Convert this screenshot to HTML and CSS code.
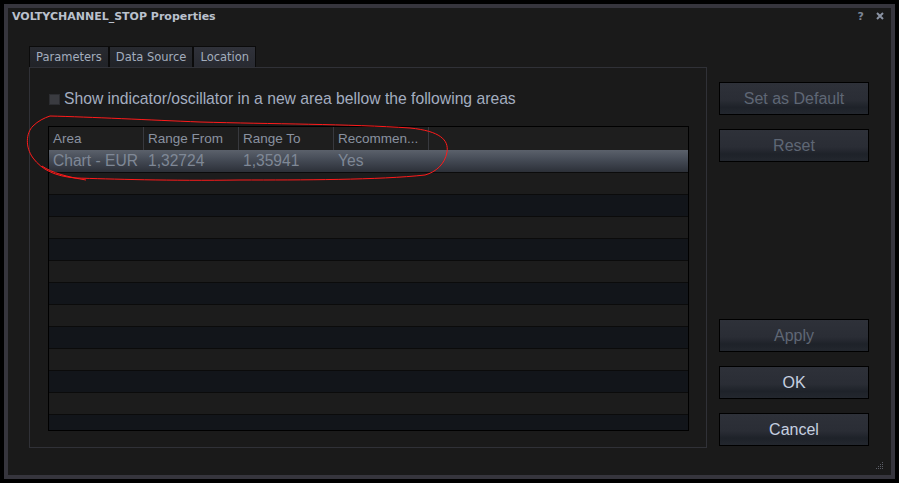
FILE: index.html
```html
<!DOCTYPE html>
<html>
<head>
  <title>VOLTYCHANNEL_STOP Properties</title>
  <link rel="stylesheet" href="styles.css">
</head>
<body>
<div class="window">
  <div class="dialog">
    <div class="titlebar">
      <span class="title">VOLTYCHANNEL_STOP Properties</span>
      <span class="controls">
        <span class="help">?</span>
        <svg class="close" width="8" height="8" viewBox="0 0 8 8"><path d="M1 1 L7 7 M7 1 L1 7" stroke="#8a93a3" stroke-width="2"/></svg>
      </span>
    </div>
    <div class="content">
      <div class="main">
        <div class="tabs">
          <div class="tab">Parameters</div>
          <div class="tab">Data Source</div>
          <div class="tab active">Location</div>
        </div>
        <div class="panel">
          <label class="check"><span class="box"></span>Show indicator/oscillator in a new area bellow the following areas</label>
          <div class="grid">
            <div class="grid-head">
              <div class="cell">Area</div>
              <div class="cell">Range From</div>
              <div class="cell">Range To</div>
              <div class="cell">Recommen...</div>
            </div>
            <div class="row selected">
              <div class="cell">Chart - EUR</div>
              <div class="cell">1,32724</div>
              <div class="cell">1,35941</div>
              <div class="cell">Yes</div>
            </div>
            <div class="rows">
              <div class="row"></div>
              <div class="row"></div>
              <div class="row"></div>
              <div class="row"></div>
              <div class="row"></div>
              <div class="row"></div>
              <div class="row"></div>
              <div class="row"></div>
              <div class="row"></div>
              <div class="row"></div>
              <div class="row"></div>
              <div class="row"></div>
            </div>
          </div>
        </div>
      </div>
      <div class="side">
        <button class="btn disabled">Set as Default</button>
        <button class="btn disabled">Reset</button>
        <div class="spacer"></div>
        <button class="btn disabled">Apply</button>
        <button class="btn">OK</button>
        <button class="btn">Cancel</button>
      </div>
    </div>
    <svg class="grip" width="8" height="8" viewBox="0 0 8 8" fill="#5a5d66">
      <rect x="6" y="0" width="1" height="1"/>
      <rect x="4" y="2" width="1" height="1"/><rect x="6" y="2" width="1" height="1"/>
      <rect x="2" y="4" width="1" height="1"/><rect x="4" y="4" width="1" height="1"/><rect x="6" y="4" width="1" height="1"/>
      <rect x="0" y="6" width="1" height="1"/><rect x="2" y="6" width="1" height="1"/><rect x="4" y="6" width="1" height="1"/><rect x="6" y="6" width="1" height="1"/>
    </svg>
  </div>
  <!-- red hand drawn mark around the header and first row -->
  <svg class="annotation" width="899" height="483" viewBox="0 0 899 483">
    <path d="M50,116 C90,117 150,120 200,122 C270,124 350,124 410,128 C440,131 449,140 447,152 C445,164 436,172 425,175 C380,180 300,180 240,180 C170,181 110,179 75,178 C55,176 42,170 33,158 C25,147 26,133 33,126 C38,121 44,118 50,116 M42,166 C52,173 68,177 86,180" fill="none" stroke="#ff1a1a" stroke-width="1"/>
  </svg>
</div>
</body>
</html>
```

FILE: styles.css
```css
body {
    margin: 0;
    background: #000;
}
.window {
    position: relative;
    width: 899px;
    height: 483px;
    padding: 4px;
    box-sizing: border-box;
}
.dialog {
    position: relative;
    height: 100%;
    box-sizing: border-box;
    border: 4px solid #36353d;
    background: #1a1a1a;
    display: flex;
    flex-direction: column;
}
.titlebar {
    height: 16px;
    padding: 0 7px 0 4px;
    display: flex;
    align-items: center;
    justify-content: space-between;
}
.title {
    font-family: "DejaVu Sans", sans-serif;
    font-weight: bold;
    font-size: 11px;
    color: #bac1cd;
}
.controls {
    display: flex;
    align-items: center;
    gap: 12px;
}
.help {
    font-family: "DejaVu Sans", sans-serif;
    font-weight: bold;
    font-size: 11px;
    color: #7c8596;
}
.content {
    margin-top: 22px;
    padding-left: 21px;
    height: 402px;
    display: flex;
}
.main {
    width: 678px;
    display: flex;
    flex-direction: column;
}
.tabs {
    height: 21px;
    display: flex;
}
.tab {
    padding: 0 6px;
    border: 1px solid #0b0b0b;
    border-bottom: none;
    background: linear-gradient(#282a30, #212328);
    font-family: "DejaVu Sans", sans-serif;
    font-size: 11.5px;
    line-height: 20px;
    color: #a3adbd;
}
.tab.active {
    background: linear-gradient(#30323a, #282a31);
}
.panel {
    flex: 1;
    border: 1px solid #303137;
    display: flex;
    flex-direction: column;
}
.check {
    margin-top: 22px;
    padding-left: 19px;
    height: 18px;
    display: flex;
    align-items: center;
    font-family: "Liberation Sans", sans-serif;
    font-size: 15.7px;
    color: #a4aec0;
}
.box {
    width: 11px;
    height: 11px;
    margin-right: 4px;
    background: #3a3b40;
    box-sizing: border-box;
    border: 1px solid #2c2d31;
}
.grid {
    margin: 18px 17px 0 18px;
    height: 305px;
    box-sizing: border-box;
    border: 1px solid #000;
    background: #1c1c1c;
    overflow: hidden;
    font-family: "Liberation Sans", sans-serif;
}
.grid-head {
    height: 23px;
    display: flex;
    background: #1e1e1e;
}
.grid-head .cell {
    width: 95px;
    box-sizing: border-box;
    padding-left: 4px;
    border-right: 1px solid #38393e;
    font-size: 13.5px;
    line-height: 23px;
    color: #8a92a0;
    white-space: nowrap;
}
.row {
    height: 21px;
    border-top: 1px solid #0b0b0b;
    background: #1c1c1c;
}
.row:nth-child(even) {
    background: #12151a;
}
.row.selected {
    height: 22px;
    border-top: none;
    display: flex;
    background: linear-gradient(#5b616b, #474d58 40%, #2c3038);
}
.row.selected .cell {
    width: 95px;
    box-sizing: border-box;
    padding-left: 4px;
    font-size: 15.6px;
    line-height: 22px;
    color: #7f8896;
    white-space: nowrap;
}
.side {
    margin-left: 12px;
    width: 150px;
    padding: 36px 0 2px;
    display: flex;
    flex-direction: column;
    gap: 14px;
}
.spacer {
    flex: 1;
}
.btn {
    height: 33px;
    border: 1px solid #000;
    background: linear-gradient(#2e3139, #2a2d35 55%, #1e2229 78%, #23272e);
    font-family: "Liberation Sans", sans-serif;
    font-size: 16px;
    color: #c6d0e0;
    padding: 0;
}
.btn.disabled {
    color: #5f6775;
}
.grip {
    position: absolute;
    right: 7px;
    bottom: 5px;
}
.annotation {
    position: absolute;
    left: 0;
    top: 0;
    pointer-events: none;
}
```
